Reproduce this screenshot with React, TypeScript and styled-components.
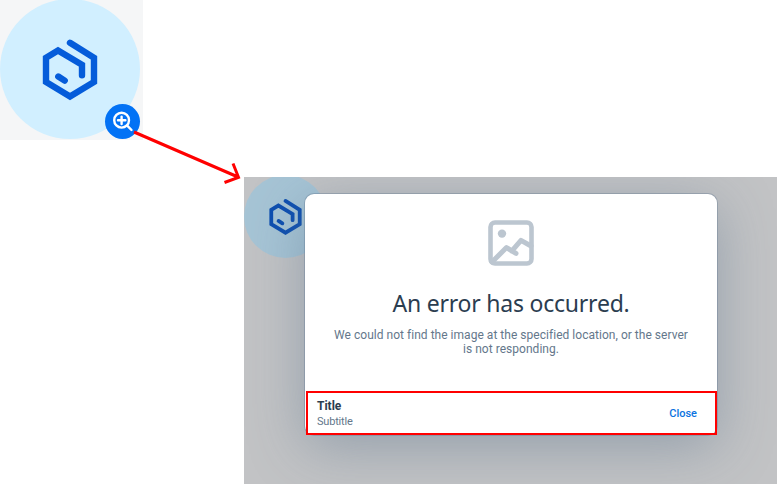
import React from "react";
import styled, { createGlobalStyle } from "styled-components";

const GlobalStyle = createGlobalStyle`
  * { box-sizing: border-box; }
  body {
    margin: 0;
    background: #fff;
    font-family: Roboto, "Noto Sans", sans-serif;
  }
`;

const Page = styled.main`
  position: relative;
  width: 777px;
  height: 484px;
  display: flex;
  flex-direction: column;
  justify-content: space-between;
  overflow: hidden;
`;

const Tile = styled.section`
  position: relative;
  width: 143px;
  height: 140px;
  background: #f5f6f7;
  overflow: hidden;
`;

const Avatar = styled.div<{ $size: number; $dimmed?: boolean }>`
  width: ${(p) => p.$size}px;
  height: ${(p) => p.$size}px;
  margin-top: ${(p) => (p.$dimmed ? -2.5 : -1)}px;
  border-radius: 50%;
  color: ${(p) => (p.$dimmed ? "#0c4eb0" : "#055cda")};
  background: ${(p) => (p.$dimmed ? "#a6c4d5" : "#d1efff")};
  flex: none;

  svg {
    display: block;
    width: 100%;
    height: 100%;
  }
`;

const ZoomBadge = styled.button`
  position: absolute;
  left: 105px;
  top: 104px;
  width: 35px;
  height: 35px;
  padding: 0;
  border: 0;
  border-radius: 50%;
  background: #0272f5;

  svg {
    display: block;
  }
`;

const Viewer = styled.section`
  width: 533px;
  height: 307px;
  align-self: flex-end;
  display: grid;
  background: #c2c3c5;
  overflow: hidden;

  > * {
    grid-area: 1 / 1;
  }
`;

const Dialog = styled.div`
  width: 412px;
  height: 241px;
  margin: 17px 0 0 61px;
  display: flex;
  flex-direction: column;
  border-radius: 9px;
  background: #fff;
  box-shadow: 0 0 0 1px rgba(91, 115, 139, 0.35), 0 12px 56px rgba(91, 115, 139, 0.45);
  z-index: 1;
`;

const Message = styled.div`
  height: 197px;
  padding-top: 26px;
  display: flex;
  flex-direction: column;
  align-items: center;
  text-align: center;
`;

const Heading = styled.h1`
  margin: 20px 0 0;
  font-family: "Noto Sans", sans-serif;
  font-size: 23px;
  line-height: 34px;
  font-weight: 400;
  letter-spacing: -0.22px;
  white-space: nowrap;
  color: #2b3d50;
`;

const Description = styled.p`
  margin: 8px 0 0;
  font-size: 12px;
  line-height: 14px;
  white-space: nowrap;
  letter-spacing: 0.03px;
  color: #64778b;
`;

const Footer = styled.footer`
  height: 44px;
  margin-left: 1px;
  padding: 1px 18px 0 9px;
  display: flex;
  align-items: center;
  justify-content: space-between;
  border: 2px solid #ff0000;
`;

const Caption = styled.div`
  display: flex;
  flex-direction: column;
`;

const Title = styled.span`
  font-size: 12px;
  line-height: 16px;
  font-weight: 700;
  color: #2b3d50;
`;

const Subtitle = styled.span`
  font-size: 11px;
  line-height: 16px;
  letter-spacing: -0.2px;
  color: #64778b;
`;

const CloseButton = styled.button`
  padding: 0;
  border: 0;
  background: none;
  font-family: inherit;
  font-size: 11px;
  line-height: 16px;
  font-weight: 500;
  color: #0b73e0;
`;

const Arrow = styled.svg`
  position: absolute;
  left: 0;
  top: 0;
  pointer-events: none;
`;

const ProductMark = () => (
  <svg viewBox="0 -1 140 140" fill="none" stroke="currentColor" strokeWidth="6.4" strokeLinecap="round" strokeLinejoin="miter">
    <path d="M70 42.8 94 57.7V81.9L70 96.4 46 81.9V57.7L58 50.5 82 64.8V75.2M58.3 76.5 64.7 80.6" />
  </svg>
);

const ZoomIcon = () => (
  <svg width="35" height="35" fill="none" stroke="#fff" strokeWidth="2.4" strokeLinecap="round">
    <circle cx="16.6" cy="16.2" r="7.4" />
    <path d="M16.6 12.6v7.4M13 16.3h7.4M22.2 21.6 26.5 26" />
  </svg>
);

const PictureIcon = () => (
  <svg width="46" height="46" fill="none" stroke="#bcc6d0" strokeWidth="4.6" strokeLinecap="round" strokeLinejoin="round">
    <rect x="2.5" y="2.5" width="41" height="41" rx="4.5" />
    <circle cx="14" cy="13.6" r="4.2" fill="#bcc6d0" stroke="none" />
    <path strokeWidth="5" d="M4 42 18.5 27.6 28 33.4M23.7 31.2 33 20.4 43 26" />
  </svg>
);

export default function App() {
  return (
    <Page>
      <GlobalStyle />
      <Tile>
        <Avatar $size={140}>
          <ProductMark />
        </Avatar>
        <ZoomBadge aria-label="Zoom in">
          <ZoomIcon />
        </ZoomBadge>
      </Tile>
      <Viewer>
        <Avatar $size={83} $dimmed>
          <ProductMark />
        </Avatar>
        <Dialog role="dialog">
          <Message>
            <PictureIcon />
            <Heading>An error has occurred.</Heading>
            <Description>
              We could not find the image at the specified location, or the server
              <br />
              is not responding.
            </Description>
          </Message>
          <Footer>
            <Caption>
              <Title>Title</Title>
              <Subtitle>Subtitle</Subtitle>
            </Caption>
            <CloseButton>Close</CloseButton>
          </Footer>
        </Dialog>
      </Viewer>
      <Arrow width="777" height="484" fill="none" stroke="#ff0000" strokeWidth="3">
        <path d="M134 132 238 177M233 163.5 238.5 177.3 224.5 182.5" />
      </Arrow>
    </Page>
  );
}
